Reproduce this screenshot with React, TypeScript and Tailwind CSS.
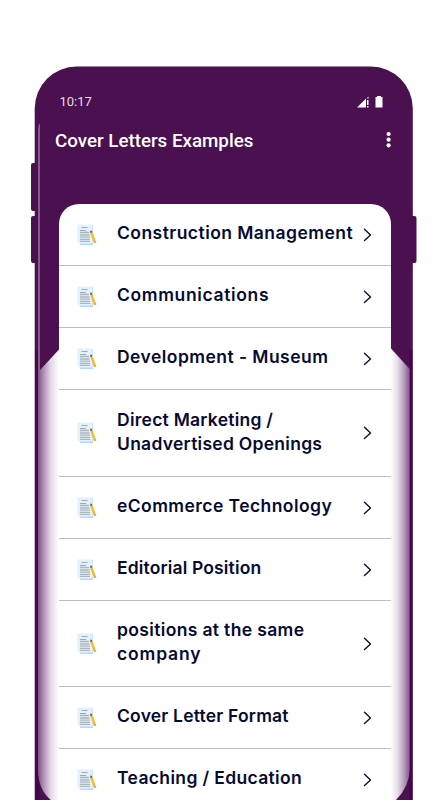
import React from "react";

type Item = { lines: string[]; spacing: string[]; height: string };

const items: Item[] = [
  { lines: ["Construction Management"], spacing: ["tracking-[0.45px]"], height: "h-[62px]" },
  { lines: ["Communications"], spacing: ["tracking-[0.64px]"], height: "h-[62px]" },
  { lines: ["Development - Museum"], spacing: ["tracking-[0.45px]"], height: "h-[62px]" },
  { lines: ["Direct Marketing /", "Unadvertised Openings"], spacing: ["tracking-[0.25px]", "tracking-[0.27px]"], height: "h-[87px]" },
  { lines: ["eCommerce Technology"], spacing: ["tracking-[0.43px]"], height: "h-[62px]" },
  { lines: ["Editorial Position"], spacing: ["tracking-[0.15px]"], height: "h-[62px]" },
  { lines: ["positions at the same", "company"], spacing: ["tracking-[0.35px]", "tracking-[0.85px]"], height: "h-[86px]" },
  { lines: ["Cover Letter Format"], spacing: ["tracking-[0.2px]"], height: "h-[62px]" },
  { lines: ["Teaching / Education"], spacing: ["tracking-[0.35px]"], height: "h-[62px]" },
];

function NoteIcon() {
  return (
    <svg className="h-[22px] w-[20px] shrink-0" viewBox="0 0 20 22">
      <path d="M2 1h14v20h-13z" fill="#b5d8fb" />
      <path d="M.5 .5h15v19H2L.5 18z" fill="#e3f1fd" />
      <path d="M4.500 3.500h6M3 6.500h6" stroke="#9da9b4" strokeWidth="1" />
      <path d="M3 8.500h9M3 11h9.500M3 13.200h10M3 15.400h10M3 17.400h10" stroke="#acb5bd" strokeWidth="1.300" />
      <path d="M14.200 8l3.800 10.300" stroke="#fbb829" strokeWidth="2.400" />
      <path d="M13.200 6.500l2 .4-.6 1.800-1.200.4z" fill="#535865" />
      <path d="M17.700 17.500l.6 1.300" stroke="#eea43c" strokeWidth="2.400" />
    </svg>
  );
}

function Frame() {
  return (
    <svg className="absolute inset-0 h-[800px] w-[447px]" viewBox="0 0 447 800">
      <defs>
        <linearGradient id="left" x1="38" x2="59" y1="0" y2="0" gradientUnits="userSpaceOnUse">
          <stop offset="0" stopColor="#815084" />
          <stop offset=".3" stopColor="#b499b8" />
          <stop offset=".6" stopColor="#e1d7e3" />
          <stop offset="1" stopColor="#fff" />
        </linearGradient>
        <linearGradient id="right" x1="410" x2="391" y1="0" y2="0" gradientUnits="userSpaceOnUse">
          <stop offset="0" stopColor="#815084" />
          <stop offset=".3" stopColor="#b499b8" />
          <stop offset=".65" stopColor="#e6dde7" />
          <stop offset="1" stopColor="#fff" />
        </linearGradient>
      </defs>
      <path d="M35 163h-2q-2 0-2 2v44q0 2 2 2h2zM35 216h-2q-2 0-2 2v43q0 2 2 2h2zM412 216h2.500q2 0 2 2v43q0 2-2 2H412z" fill="#4b1050" />
      <path d="M34.700 801V108.500A42 42 0 0 1 76.700 66.500H370.800A42 42 0 0 1 412.800 108.500V801z" fill="#4b1050" />
      <path d="M35.500 350h4v451h-4zM409.700 350h2.500v451h-2.500z" fill="#43064a" />
      <path d="M38 370h2L59 349.500V801h-7Q38 790 38 770z" fill="url(#left)" />
      <path d="M391 348.500L409.700 369v400Q409.700 787 395 801h-4z" fill="url(#right)" />
      <path d="M38 372V130Q38 126 39.500 123L40 125V370z" fill="#855c89" />
    </svg>
  );
}

export default function App() {
  return (
    <main className="relative h-[800px] w-[447px] overflow-hidden bg-white">
      <Frame />
      <div className="relative flex h-full flex-col pr-[56px] pl-[58.500px]">
        <header className="h-[204px] shrink-0 pt-[94px] font-['Roboto',sans-serif] text-white">
          <div className="flex h-4 items-center justify-between">
            <span className="pl-px text-[13px] leading-4 text-[#e8dce9]">10:17</span>
            <svg className="mr-[6px] h-[14px] w-[28px]" viewBox="0 0 28 14" fill="white">
              <path d="M0 12.500L9 3.500v9zM10 3l1.500-1.500v2H10zM10 5h1.500v5H10zM10 11h1.500v1.500H10z" />
              <path d="M20 1h4v1h1.500v10.500h-7V2H20z" />
            </svg>
          </div>
          <div className="mt-[19px] -ml-[3.500px] flex h-6 w-[336.500px] items-center justify-between">
            <h1 className="text-[18.750px] leading-6 font-medium whitespace-nowrap">Cover Letters Examples</h1>
            <svg className="-mt-[2px] h-[18px] w-[6px] shrink-0" viewBox="0 0 6 18" fill="white">
              <circle cx="2.600" cy="3" r="2.100" /><circle cx="2.600" cy="8.700" r="2.100" /><circle cx="2.600" cy="14.300" r="2.100" />
            </svg>
          </div>
        </header>
        <ul className="rounded-t-[20px] bg-white">
          {items.map((item) => (
            <li key={item.lines[0]} className={`flex items-center border-b border-[#bdbdbd] pr-[19px] pl-[18.500px] ${item.height}`}>
              <NoteIcon />
              <div className="ml-[20px] flex-1 pb-[3px] font-['Inter',sans-serif] text-[17.500px] leading-6 font-[560] whitespace-nowrap text-[#060b32]">
                {item.lines.map((line, i) => (
                  <div key={line}><span className={item.spacing[i]}>{line}</span></div>
                ))}
              </div>
              <svg className="h-[14px] w-[9px] shrink-0" viewBox="0 0 9 14" fill="none" stroke="#0c1033" strokeWidth="1.400" strokeLinecap="round" strokeLinejoin="round">
                <path d="M1.500 1.300L7.500 7l-6 5.500" />
              </svg>
            </li>
          ))}
        </ul>
      </div>
    </main>
  );
}
